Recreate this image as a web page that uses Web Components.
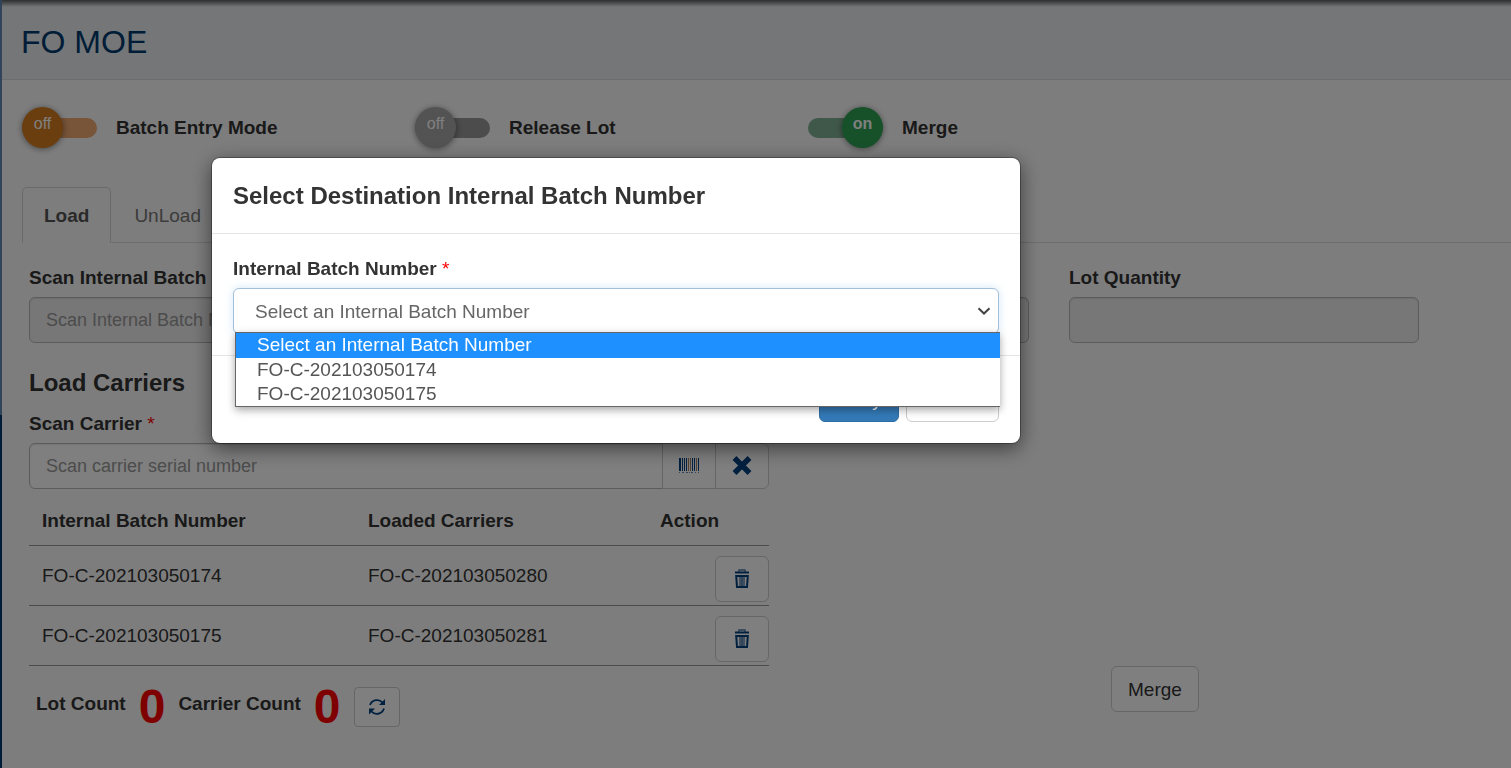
<!DOCTYPE html>
<html lang="en">
<head>
<meta charset="utf-8">
<title>FO MOE</title>
<style>
body { margin: 0; background: #fbfbfb; color: #333; font: 19px/27px "Liberation Sans", Arial, sans-serif; }
</style>
</head>
<body>
<moe-page></moe-page>
<script>
const define = (name, html, setup) => {
  const template = document.createElement('template');
  template.innerHTML = html;
  customElements.define(name, class extends HTMLElement {
    constructor() {
      super();
      this.attachShadow({ mode: 'open' }).append(template.content.cloneNode(true));
    }
    connectedCallback() { if (setup) setup(this, this.shadowRoot); }
  });
};

const icons = {
  barcode: '<svg width="22" height="17" viewBox="0 0 22 17" fill="#004080"><path d="M1 0h2v13H1zM4 0h1v13H4zM6 0h1v13H6zM8 0h1v13H8zM14 0h1v13h-1zM16 0h1v13h-1zM20 0h1v13h-1z"/><path fill="#a08060" d="M10 0h1v13h-1zM12 0h1v13h-1zM18 0h1v13h-1z"/><path opacity=".6" d="M1 14h1v1H1zM4 14h2v1H4zM8 14h2v1H8zM11 14h1v1h-1zM13 14h2v1h-2zM17 14h1v1h-1zM20 14h1v1h-1z"/></svg>',
  remove: '<svg width="20" height="20" viewBox="0 0 20 20"><path d="M2.500 2L17.500 17M17.500 2L2.500 17" stroke="#004080" stroke-width="5.400"/></svg>',
  trash: '<svg width="16" height="20" viewBox="0 0 16 20" fill="none" stroke="#004080"><path d="M5 3V1h6v2" stroke-width="1.4" stroke-opacity=".7"/><path d="M1 3.500h14" stroke-width="2"/><path d="M2.200 7H13.800L13 18H3z" stroke-width="2"/><path d="M6 7.500V18M10 7.500V18" stroke-width="1"/><path d="M8 7.500V18" stroke-width="1.200"/></svg>',
  refresh: '<svg width="18" height="18" viewBox="0 0 18 18" fill="none" stroke="#004080" stroke-width="1.800"><path d="M2 7C4 1.500 11 .5 14.500 4.500M16 10.500C14 16.500 7 17.500 3.500 13.500"/><path fill="#004080" stroke="none" d="M17 1v6h-6zM1 16.500v-6h6z"/></svg>'
};

define('toggle-switch', `
<style>
:host { display: block; }
label { display: flex; align-items: center; gap: 19px; font-weight: bold; }
.track { position: relative; width: 75px; height: 41px; display: flex; align-items: center; }
.track::before { content: ""; flex: 1; height: 20px; border-radius: 10px; background: var(--track); }
input { position: absolute; inset: 0; margin: 0; opacity: 0; }
.knob { position: absolute; left: 0; top: 0; width: 41px; height: 41px; border-radius: 50%; background: var(--knob);
  box-shadow: 0 1px 6px rgba(0,0,0,.45); color: #fff; font-size: 16px; line-height: 33px; text-align: center; font-weight: normal; }
:host([on]) .knob { left: auto; right: 0; font-weight: bold; }
</style>
<label><span class="track"><input type="checkbox"><span class="knob"></span></span><slot></slot></label>`,
(el, root) => {
  const on = el.hasAttribute('on');
  root.querySelector('input').checked = on;
  root.querySelector('.knob').textContent = on ? 'on' : 'off';
});

define('tab-bar', `
<style>
:host { display: block; margin-left: 20px; }
nav { display: flex; border-bottom: 1px solid #ddd; }
a { box-sizing: border-box; height: 56px; margin: 0 1px -1px 0; padding: 14px 21px; border: 1px solid transparent; border-radius: 5px 5px 0 0; color: #777; text-decoration: none; }
a.active { border-color: #d4d4d4; border-bottom-color: #fbfbfb; background: #fbfbfb; color: #555; font-weight: bold; }
</style>
<nav><a class="active" href="#load">Load</a><a href="#unload">UnLoad</a></nav>`);

define('form-field', `
<style>
:host { display: block; }
label { display: block; margin-bottom: 6px; font-weight: bold; }
i { color: #f00; font-style: normal; font-weight: normal; }
.group { display: flex; }
input { box-sizing: border-box; flex: 1; min-width: 0; height: 46px; padding: 0 16px; border: 1px solid #b8b8b8; border-radius: 6px; background: #fff;
  box-shadow: inset 0 1px 1px rgba(0,0,0,.08); font: 18px "Liberation Sans", Arial, sans-serif; color: #555; }
input::placeholder { color: #999; opacity: 1; }
input:disabled { background: #eee; }
:host([grouped]) input { border-radius: 6px 0 0 6px; }
</style>
<label for="box"><span></span> <i></i></label>
<div class="group"><input id="box" type="text"><slot></slot></div>`,
(el, root) => {
  root.querySelector('span').textContent = el.getAttribute('label');
  if (el.hasAttribute('required')) root.querySelector('i').textContent = '*';
  const input = root.querySelector('input');
  input.placeholder = el.getAttribute('placeholder') || '';
  input.disabled = el.hasAttribute('disabled');
});

define('ui-button', `
<style>
:host { display: inline-block; }
button { display: flex; align-items: center; justify-content: center; box-sizing: border-box; width: 100%; height: var(--height, 46px); padding: 0 16px;
  border: 1px solid #ccc; border-radius: var(--radius, 6px); background: #fff; color: #333; font: 19px/27px "Liberation Sans", Arial, sans-serif; }
:host([primary]) button { border-color: #2e6da4; background: #337ab7; color: #fff; }
svg { display: block; flex: none; }
</style>
<button type="button"><slot></slot></button>`,
(el, root) => {
  const icon = el.getAttribute('icon');
  if (!icon) return;
  const button = root.querySelector('button');
  button.innerHTML = icons[icon];
  button.setAttribute('aria-label', icon);
});

define('carrier-table', `
<style>
:host { display: block; }
table { width: 100%; table-layout: fixed; border-collapse: separate; border-spacing: 0; }
th { box-sizing: border-box; padding: 18px 13px 11px; border-bottom: 1px solid #999; text-align: left; }
.carriers { width: 292px; }
.action { width: 122px; }
td { padding: 0 0 0 13px; border-bottom: 1px solid #999; }
td:last-child { padding: 10px 0 3px; text-align: right; }
ui-button { display: block; width: 54px; margin-left: auto; }
</style>
<table>
<thead><tr><th>Internal Batch Number</th><th class="carriers">Loaded Carriers</th><th class="action">Action</th></tr></thead>
<tbody>
<tr><td>FO-C-202103050174</td><td>FO-C-202103050280</td><td><ui-button icon="trash"></ui-button></td></tr>
<tr><td>FO-C-202103050175</td><td>FO-C-202103050281</td><td><ui-button icon="trash"></ui-button></td></tr>
</tbody>
</table>`);

define('count-bar', `
<style>
:host { display: flex; align-items: center; gap: 13px; margin: 21px 0 0 7px; font-weight: bold; }
span { padding-bottom: 8px; }
output { color: #f00; font-size: 48px; line-height: 40px; }
ui-button { width: 46px; --height: 40px; --radius: 4px; }
</style>
<span>Lot Count</span><output>0</output><span>Carrier Count</span><output>0</output><ui-button icon="refresh"></ui-button>`);

define('batch-select', `
<style>
:host { display: block; position: relative; }
label { display: block; margin-bottom: 6px; font-weight: bold; }
i { color: #f00; font-style: normal; font-weight: normal; }
.box { display: flex; align-items: center; }
select { appearance: none; box-sizing: border-box; width: 100%; height: 46px; padding: 0 21px; border: 1px solid #a4bfda; border-radius: 6px; background: #fff;
  box-shadow: 0 0 8px rgba(102,175,233,.3); font: 19px "Liberation Sans", Arial, sans-serif; color: #666; outline: none; }
svg { margin-left: -22px; pointer-events: none; }
ul { position: absolute; top: 77px; left: 2px; right: -1px; z-index: 1; margin: 0; padding: 0; list-style: none; border: 1px solid #666; border-right: 0; background: #fff;
  box-shadow: 0 3px 8px rgba(0,0,0,.35); color: #555; line-height: 24px; }
li { padding: 0 21px; }
li[aria-selected] { padding-bottom: 1px; background: #1e90ff; color: #fff; }
</style>
<label for="batch">Internal Batch Number <i>*</i></label>
<div class="box"><select id="batch"><option>Select an Internal Batch Number</option><option>FO-C-202103050174</option><option>FO-C-202103050175</option></select>
<svg width="14" height="8" viewBox="0 0 14 8" fill="none" stroke="#444" stroke-width="2"><path d="M1.500 1.200L7 6.500L12.500 1.200"/></svg></div>
<ul role="listbox"><li role="option" aria-selected="true">Select an Internal Batch Number</li><li role="option">FO-C-202103050174</li><li role="option">FO-C-202103050175</li></ul>`);

define('modal-dialog', `
<style>
:host { position: fixed; inset: 0; z-index: 10; background: rgba(0,0,0,.5); }
section { width: 808px; max-width: 80%; margin: 158px 0 0 212px; border-radius: 8px; background: #fff; box-shadow: 0 0 0 1px rgba(0,0,0,.3), 0 5px 20px rgba(0,0,0,.55); }
h2 { margin: 0; padding: 22px 21px 21px; font-size: 24px; line-height: 32px; border-bottom: 1px solid #e5e5e5; }
.body { padding: 21px; }
footer { display: flex; justify-content: flex-end; gap: 7px; padding: 20px 21px 21px; border-top: 1px solid #e5e5e5; }
</style>
<section role="dialog" aria-modal="true" aria-labelledby="title">
<h2 id="title"><slot name="title"></slot></h2>
<div class="body"><slot></slot></div>
<footer><slot name="actions"></slot></footer>
</section>`);

define('moe-page', `
<style>
:host { display: grid; grid-template-columns: 2px minmax(0, 1fr); min-height: 100vh; }
.edge { background: linear-gradient(#6288b4 54%, #003870 54%); }
header { padding: 22px 19px 17px; border-bottom: 1px solid #d6dadd; color: #003b70;
  background: linear-gradient(rgba(0,0,0,.6), transparent 7px), #e9edef; }
h1 { margin: 0; font-size: 32px; line-height: 40px; font-weight: normal; }
.toggles { display: grid; grid-template-columns: 393fr 393fr 703fr; padding: 27px 0 39px 20px; }
.content { padding: 21px 92px 41px 27px; }
.row { display: grid; grid-template-columns: 1000fr 350fr; gap: 40px; }
.work { display: grid; grid-template-columns: 740fr 300fr 350fr; margin-top: 24px; }
.work > :last-child { grid-column: 3; align-self: end; justify-self: start; margin: 0 0 15px 42px; }
h2 { margin: 0 0 11px; font-size: 24px; line-height: 32px; }
.group { width: 54px; margin-left: -1px; --radius: 0; }
.last { --radius: 0 6px 6px 0; }
</style>
<div class="edge"></div>
<main>
<header><h1>FO MOE</h1></header>
<div class="toggles">
<toggle-switch style="--knob:#d57d1e;--track:#f0a870">Batch Entry Mode</toggle-switch>
<toggle-switch style="--knob:#a6a6a6;--track:#989898">Release Lot</toggle-switch>
<toggle-switch on style="--knob:#2ea255;--track:#80b094">Merge</toggle-switch>
</div>
<tab-bar></tab-bar>
<div class="content">
<div class="row">
<form-field label="Scan Internal Batch Number" placeholder="Scan Internal Batch Number" disabled></form-field>
<form-field label="Lot Quantity" disabled></form-field>
</div>
<div class="work">
<div class="left">
<h2>Load Carriers</h2>
<form-field label="Scan Carrier" placeholder="Scan carrier serial number" required grouped>
<ui-button class="group" icon="barcode"></ui-button><ui-button class="group last" icon="remove"></ui-button>
</form-field>
<carrier-table></carrier-table>
<count-bar></count-bar>
</div>
<ui-button>Merge</ui-button>
</div>
</div>
</main>
<modal-dialog>
<span slot="title">Select Destination Internal Batch Number</span>
<batch-select></batch-select>
<ui-button slot="actions" primary>Retry</ui-button>
<ui-button slot="actions">Cancel</ui-button>
</modal-dialog>`);
</script>
</body>
</html>
